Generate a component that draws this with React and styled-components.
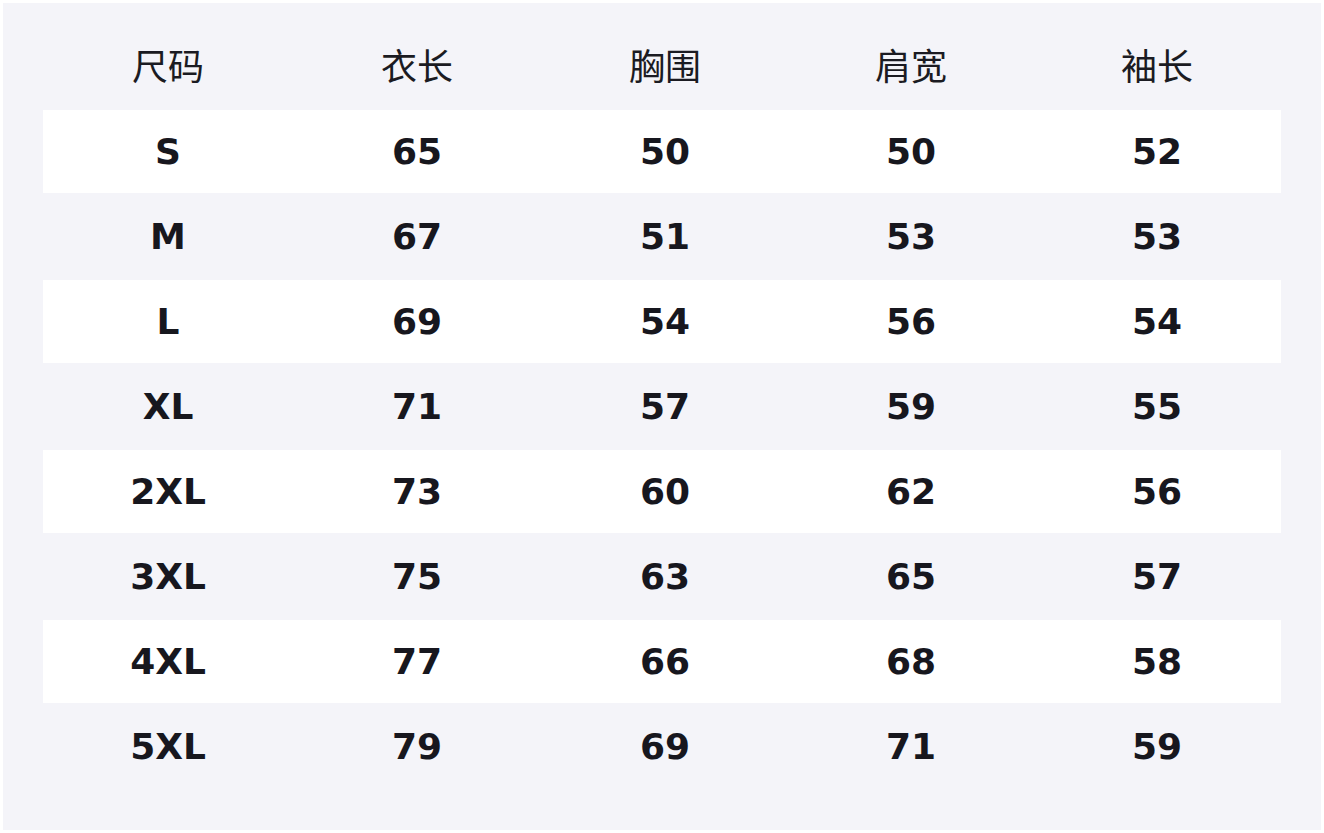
import styled, { createGlobalStyle } from 'styled-components';

const GlobalStyle = createGlobalStyle`
  html, body {
    margin: 0;
    padding: 0;
    background: #ffffff;
  }
  body {
    font-family: 'DejaVu Sans', 'Noto Sans CJK SC', sans-serif;
  }
`;

const Page = styled.div`
  padding: 3px;
  width: 1324px;
  height: 833px;
  box-sizing: border-box;
`;

const Panel = styled.div`
  width: 1318px;
  height: 827px;
  box-sizing: border-box;
  background: #f4f4f9;
  padding: 22px 40px 40px;
`;

const Row = styled.div`
  display: grid;
  grid-template-columns: 250px 248px 248px 244px 248px;
  height: 85px;
  box-sizing: border-box;
  border-bottom: 2px solid #f4f4f9;
  background: ${(p) => (p.$striped ? '#ffffff' : 'transparent')};
`;

const HeadCell = styled.div`
  display: flex;
  align-items: center;
  justify-content: center;
  font-family: 'Noto Sans CJK SC', 'DejaVu Sans', sans-serif;
  font-size: 36px;
  font-weight: 400;
  color: #1b1b22;
  padding-bottom: 6px;
`;

const Cell = styled.div`
  display: flex;
  align-items: center;
  justify-content: center;
  font-family: 'DejaVu Sans', sans-serif;
  font-size: 36px;
  font-weight: 700;
  color: #17171e;
  padding-bottom: 1px;
`;

const headers = ['尺码', '衣长', '胸围', '肩宽', '袖长'];

const rows = [
  ['S', 65, 50, 50, 52],
  ['M', 67, 51, 53, 53],
  ['L', 69, 54, 56, 54],
  ['XL', 71, 57, 59, 55],
  ['2XL', 73, 60, 62, 56],
  ['3XL', 75, 63, 65, 57],
  ['4XL', 77, 66, 68, 58],
  ['5XL', 79, 69, 71, 59],
];

const App = () => {
  return (
    <>
      <GlobalStyle />
      <Page>
        <Panel>
          <Row>
            {headers.map((h) => (
              <HeadCell key={h}>{h}</HeadCell>
            ))}
          </Row>
          {rows.map((r, i) => (
            <Row key={r[0]} $striped={i % 2 === 0}>
              {r.map((v, j) => (
                <Cell key={j}>{v}</Cell>
              ))}
            </Row>
          ))}
        </Panel>
      </Page>
    </>
  );
};

export default App;
